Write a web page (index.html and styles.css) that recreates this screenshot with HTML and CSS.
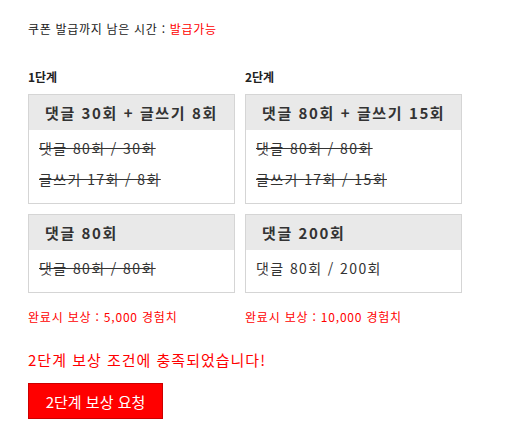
FILE: index.html
```html
<!DOCTYPE html>
<html lang="ko">
<head>
<meta charset="utf-8">
<link rel="stylesheet" href="styles.css">
</head>
<body>
<div class="page">
  <p class="timer">쿠폰 발급까지 남은 시간 : <span class="red">발급가능</span></p>
  <div class="stages">
    <div class="col col1">
      <div class="label">1단계</div>
      <div class="box">
        <div class="box-head">댓글 30회 + 글쓰기 8회</div>
        <div class="box-body">
          <div class="done">댓글 80회 / 30회</div>
          <div class="done">글쓰기 17회 / 8회</div>
        </div>
      </div>
      <div class="box">
        <div class="box-head">댓글 80회</div>
        <div class="box-body">
          <div class="done">댓글 80회 / 80회</div>
        </div>
      </div>
      <div class="reward">완료시 보상 : 5,000 경험치</div>
    </div>
    <div class="col col2">
      <div class="label">2단계</div>
      <div class="box">
        <div class="box-head">댓글 80회 + 글쓰기 15회</div>
        <div class="box-body">
          <div class="done">댓글 80회 / 80회</div>
          <div class="done">글쓰기 17회 / 15회</div>
        </div>
      </div>
      <div class="box">
        <div class="box-head">댓글 200회</div>
        <div class="box-body">
          <div>댓글 80회 / 200회</div>
        </div>
      </div>
      <div class="reward">완료시 보상 : 10,000 경험치</div>
    </div>
  </div>
  <p class="notice">2단계 보상 조건에 충족되었습니다!</p>
  <button class="request">2단계 보상 요청</button>
</div>
</body>
</html>
```
FILE: styles.css
```css
* { box-sizing: border-box; }
html, body { margin: 0; padding: 0; background: #fff; }
body {
  font-family: "Noto Sans CJK KR", "Noto Sans", sans-serif;
  color: #333;
}
.page {
  padding: 20px 0 0 28px;
}
.timer {
  margin: 0;
  font-size: 12px;
  line-height: 18px;
  color: #222;
  letter-spacing: 0.7px;
}
.red { color: #f00; }
.stages {
  display: grid;
  grid-template-columns: 207px 217px;
  column-gap: 10px;
  margin-top: 30px;
}
.col {
  display: flex;
  flex-direction: column;
}
.label {
  font-size: 12px;
  font-weight: bold;
  line-height: 18px;
  color: #222;
  margin-bottom: 8px;
}
.box {
  border: 1px solid #d5d5d5;
  margin-bottom: 10px;
}
.box-head {
  height: 35px;
  line-height: 35px;
  background: #e9e9e9;
  padding-left: 16px;
  font-size: 15px;
  font-weight: bold;
  color: #333;
  white-space: nowrap;
  letter-spacing: 1.6px;
}
.box-body {
  padding: 3px 10px 8px;
  font-size: 14px;
  line-height: 31px;
  color: #333;
  letter-spacing: 1.4px;
}
.done { text-decoration: line-through; }
.reward {
  margin-top: 4px;
  font-size: 12px;
  line-height: 20px;
  color: #f00;
  letter-spacing: 0.8px;
}
.notice {
  margin: 22px 0 0;
  font-size: 15px;
  line-height: 22px;
  color: #f00;
  letter-spacing: 1px;
}
.request {
  margin-top: 12px;
  width: 135px;
  height: 36px;
  background: #f00;
  border: 1px solid #c00;
  color: #fff;
  font-family: "Noto Sans CJK KR", "Noto Sans", sans-serif;
  font-size: 15px;
  padding: 0;
}
```
